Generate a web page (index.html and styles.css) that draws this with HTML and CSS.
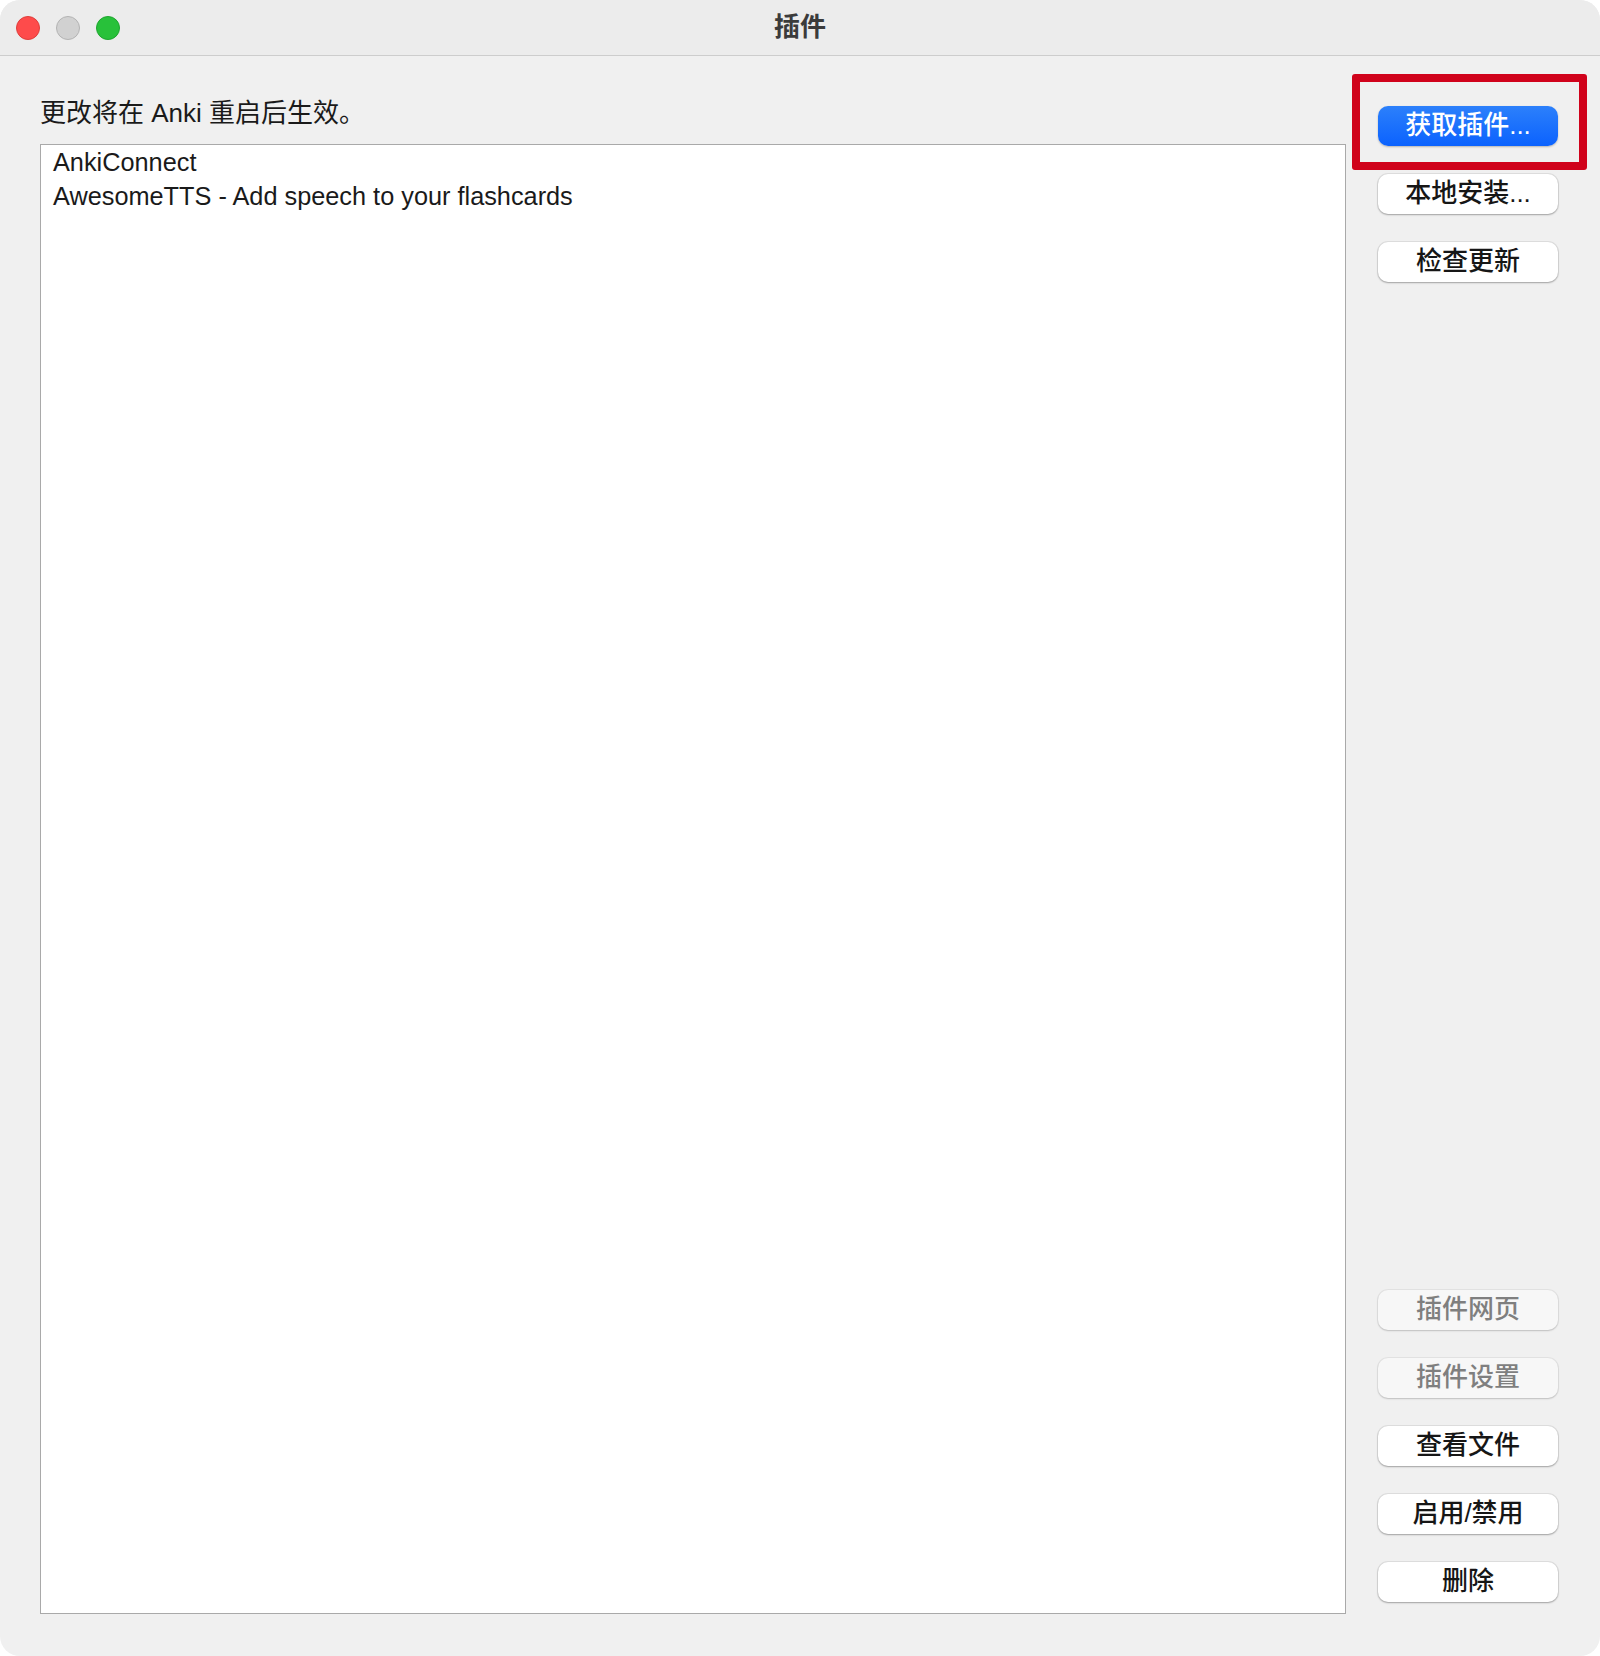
FILE: index.html
```html
<!DOCTYPE html>
<html lang="zh-CN">
<head>
    <meta charset="UTF-8">
    <meta name="viewport" content="width=device-width, initial-scale=1.0">
    <title>插件</title>
    <link rel="stylesheet" href="styles.css">
</head>
<body>
    <div class="window">
        <div class="titlebar">
            <div class="lights">
                <span class="light close"></span>
                <span class="light minimize"></span>
                <span class="light zoom"></span>
            </div>
            <div class="title">插件</div>
            <div></div>
        </div>

        <div class="content">
            <div class="main">
                <div class="note">更改将在 Anki 重启后生效。</div>
                <ul class="addon-list">
                    <li>AnkiConnect</li>
                    <li>AwesomeTTS - Add speech to your flashcards</li>
                </ul>
            </div>

            <div class="side">
                <div class="marked">
                    <button class="btn primary">获取插件...</button>
                </div>
                <button class="btn">本地安装...</button>
                <button class="btn">检查更新</button>

                <button class="btn disabled push">插件网页</button>
                <button class="btn disabled">插件设置</button>
                <button class="btn">查看文件</button>
                <button class="btn">启用/禁用</button>
                <button class="btn">删除</button>
            </div>
        </div>
    </div>
</body>
</html>
```

FILE: styles.css
```css
body {
    margin: 0;
    background: #ffffff;
    font-family: "Liberation Sans", "Noto Sans CJK SC", sans-serif;
    color: #1a1a1a;
}

.window {
    width: 1600px;
    height: 1656px;
    display: flex;
    flex-direction: column;
    background: #f0f0f0;
    border-radius: 20px;
    overflow: hidden;
}

/* title bar with the three window buttons */
.titlebar {
    height: 55px;
    display: grid;
    grid-template-columns: 1fr auto 1fr;
    align-items: center;
    background: #ececec;
    border-bottom: 1px solid #cdcdcd;
}

.lights {
    display: flex;
    gap: 16px;
    padding-left: 16px;
}

.light {
    width: 22px;
    height: 22px;
    border-radius: 50%;
    border: 1px solid transparent;
}

.light.close {
    background: #fe4b4b;
    border-color: #de3e3b;
}

.light.minimize {
    background: #d1d1d1;
    border-color: #b3b3b3;
}

.light.zoom {
    background: #28c13a;
    border-color: #1ea52f;
}

.title {
    font-size: 26px;
    line-height: 30px;
    font-weight: 700;
    color: #3b3b3b;
    padding-bottom: 2px;
}

.content {
    flex: 1;
    display: flex;
    gap: 32px;
    padding: 42px 42px 42px 40px;
    min-height: 0;
}

.main {
    flex: 1;
    display: flex;
    flex-direction: column;
}

.note {
    font-size: 26px;
    line-height: 30px;
    margin-bottom: 16px;
}

.addon-list {
    flex: 1;
    margin: 0;
    padding: 0;
    list-style: none;
    background: #ffffff;
    border: 1px solid #a9a9a9;
}

.addon-list li {
    font-size: 25.3px;
    line-height: 34px;
    padding-left: 12px;
}

/* button column */
.side {
    width: 180px;
    display: flex;
    flex-direction: column;
    gap: 28px;
    padding: 8px 0 12px;
}

.btn {
    height: 40px;
    width: 100%;
    padding: 0 0 2px;
    border: none;
    border-radius: 10px;
    background: #ffffff;
    box-shadow: 0 0 0 1px rgba(0, 0, 0, 0.07), 0 1px 2px rgba(0, 0, 0, 0.28);
    font-family: inherit;
    font-size: 26px;
    line-height: 30px;
    font-weight: 500;
    color: #161616;
}

.btn.primary {
    background: linear-gradient(#2c80fb, #0b62fe);
    color: #ffffff;
    box-shadow: 0 1px 2px rgba(0, 0, 0, 0.25);
}

.btn.disabled {
    background: #f7f7f7;
    color: #7f7f7f;
    box-shadow: 0 0 0 1px rgba(0, 0, 0, 0.05), 0 1px 2px rgba(0, 0, 0, 0.16);
}

.push {
    margin-top: auto;
}

/* red frame drawn round the first button */
.marked {
    position: relative;
}

.marked::after {
    content: "";
    position: absolute;
    top: -32px;
    right: -29px;
    bottom: -24px;
    left: -26px;
    border: 8px solid #d0021b;
    border-radius: 3px;
}
```
